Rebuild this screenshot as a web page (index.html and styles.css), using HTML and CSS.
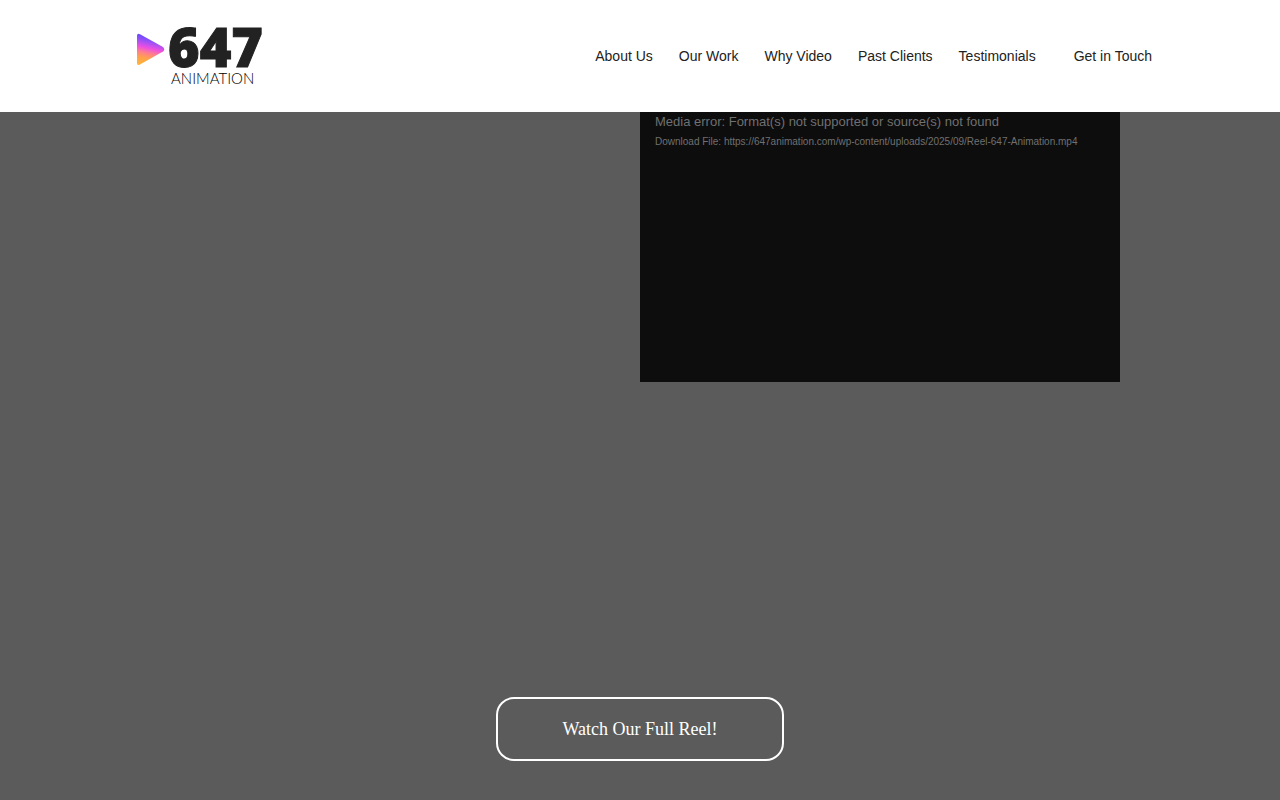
FILE: index.html
```html
<!DOCTYPE html>
<html lang="en">
<head>
<meta charset="utf-8">
<meta name="viewport" content="width=device-width, initial-scale=1">
<title>647 Animation</title>
<link rel="stylesheet" href="styles.css">
</head>
<body>

<header class="header">
    <a class="logo" href="#" aria-label="647 Animation">
        <svg width="144" height="72" viewBox="0 0 144 72">
            <defs>
                <linearGradient id="play" x1="0.3" y1="0" x2="0.1" y2="1">
                    <stop offset="0" stop-color="#5a48ff"/>
                    <stop offset="0.2" stop-color="#9450f8"/>
                    <stop offset="0.42" stop-color="#ee50e0"/>
                    <stop offset="0.58" stop-color="#ff7f8c"/>
                    <stop offset="0.75" stop-color="#ffa24a"/>
                    <stop offset="1" stop-color="#ffb63c"/>
                </linearGradient>
            </defs>
            <path d="M9 16 Q9 13 12 14.200 L35 27 Q37.500 29.500 35 31.500 L12 44.500 Q9 46 9 43 Z" fill="url(#play)"/>
            <text class="logo-number" x="40" y="47">647</text>
            <text class="logo-word" x="43" y="64">ANIMATION</text>
        </svg>
    </a>
    <nav class="nav">
        <a href="#about">About Us</a>
        <a href="#work">Our Work</a>
        <a href="#why">Why Video</a>
        <a href="#clients">Past Clients</a>
        <a href="#testimonials">Testimonials</a>
        <a class="nav-contact" href="#contact">Get in Touch</a>
    </nav>
</header>

<main class="hero">
    <div class="video">
        <p class="video-error">Media error: Format(s) not supported or source(s) not found</p>
        <a class="video-link" href="#">Download File: https://647animation.com/wp-content/uploads/2025/09/Reel-647-Animation.mp4</a>
    </div>
    <a class="reel-button" href="#reel">Watch Our Full Reel!</a>
</main>

</body>
</html>
```
FILE: styles.css
```css
* {
    box-sizing: border-box;
}

body {
    margin: 0;
    min-height: 100vh;
    display: flex;
    flex-direction: column;
    font-family: "Liberation Sans", Arial, sans-serif;
    background-color: #5b5b5b;
}

a {
    text-decoration: none;
}

.header {
    display: flex;
    justify-content: space-between;
    align-items: center;
    padding: 20px 10%;
    background-color: white;
}

.logo svg {
    display: block;
    overflow: visible;
}

.logo-number {
    font-family: "Open Sans", sans-serif;
    font-size: 54px;
    font-weight: 800;
    fill: #222;
    stroke: #222;
    stroke-width: 1px;
}

.logo-word {
    font-family: Lato, sans-serif;
    font-size: 15px;
    font-weight: 300;
    fill: black;
}

.nav {
    display: flex;
    gap: 26px;
}

.nav a {
    font-size: 14px;
    line-height: 20px;
    color: #222;
}

.nav .nav-contact {
    margin-left: 12px;
}

.hero {
    flex: 1;
    display: flex;
    flex-direction: column;
    justify-content: space-between;
    align-items: center;
    padding-bottom: 39px;
}

.video {
    width: 480px;
    max-width: 50%;
    aspect-ratio: 16 / 9;
    margin-left: 50%;
    align-self: flex-start;
    padding: 0 15px;
    background-color: #0d0d0d;
    color: #707070;
}

.video-error {
    margin: 0;
    font-size: 13px;
    line-height: 20px;
}

.video-link {
    display: block;
    font-size: 10px;
    line-height: 20px;
    color: #707070;
}

.reel-button {
    width: 288px;
    padding: 20px;
    border: 2px solid white;
    border-radius: 18px;
    font-family: "Liberation Serif", "Times New Roman", serif;
    font-size: 18px;
    line-height: 20px;
    text-align: center;
    color: white;
}
```
